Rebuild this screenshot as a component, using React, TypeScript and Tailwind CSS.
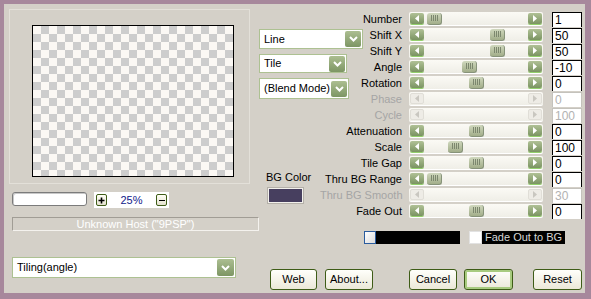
import React from "react";

type Row = { label: string; value: string; thumb?: number; disabled?: boolean };

const rows: Row[] = [
  { label: "Number", value: "1", thumb: 3 },
  { label: "Shift X", value: "50", thumb: 66 },
  { label: "Shift Y", value: "50", thumb: 66 },
  { label: "Angle", value: "-10", thumb: 38 },
  { label: "Rotation", value: "0", thumb: 45 },
  { label: "Phase", value: "0", disabled: true },
  { label: "Cycle", value: "100", disabled: true },
  { label: "Attenuation", value: "0", thumb: 45 },
  { label: "Scale", value: "100", thumb: 24 },
  { label: "Tile Gap", value: "0", thumb: 45 },
  { label: "Thru BG Range", value: "0", thumb: 3 },
  { label: "Thru BG Smooth", value: "30", disabled: true },
  { label: "Fade Out", value: "0", thumb: 45 },
];

function Arrow({ dir, disabled }: { dir: "l" | "r"; disabled?: boolean }) {
  return (
    <div
      className={
        disabled
          ? "w-[14px] h-[11px] shrink-0 rounded-[2px] bg-[#eeece6] border border-[#e0ded7] flex items-center justify-center"
          : "w-[14px] h-[11px] shrink-0 rounded-[2px] bg-gradient-to-b from-[#b0c196] to-[#7b9462] shadow-[0_1px_0_#94d06c] flex items-center justify-center"
      }
    >
      <svg width="6" height="7" viewBox="0 0 6 7">
        <path d={dir === "l" ? "M5 0 L1 3.5 L5 7Z" : "M1 0 L5 3.5 L1 7Z"} fill={disabled ? "#c9c7c0" : "#ffffff"} />
      </svg>
    </div>
  );
}

function Thumb({ offset }: { offset: number }) {
  return (
    <div
      className="h-[12px] w-[15px] shrink-0 rounded-[3px] bg-gradient-to-b from-[#d0d8be] to-[#a2ae8a] border-r border-b border-[#87937a] flex items-center justify-center gap-[1px]"
      style={{ marginLeft: offset }}
    >
      <div className="w-px h-[6px] bg-[#7c876e]" />
      <div className="w-px h-[6px] bg-[#7c876e]" />
      <div className="w-px h-[6px] bg-[#7c876e]" />
      <div className="w-px h-[6px] bg-[#7c876e]" />
    </div>
  );
}

function Chevron({ size = 16 }: { size?: number }) {
  return (
    <div
      className="shrink-0 rounded-[2px] bg-gradient-to-b from-[#acbe91] to-[#7d9664] flex items-center justify-center"
      style={{ width: size, height: size }}
    >
      <svg width="9" height="6" viewBox="0 0 9 6">
        <path d="M1 1 L4.5 4.5 L8 1" stroke="#ffffff" strokeWidth="2" fill="none" />
      </svg>
    </div>
  );
}

function Dropdown({ text, className }: { text: string; className: string }) {
  return (
    <div className={"shrink-0 flex items-center justify-between bg-white border border-[#adc192] pl-[4px] pr-[1px] text-[11px] text-black " + className}>
      <span className="whitespace-nowrap">{text}</span>
      <Chevron />
    </div>
  );
}

function Btn({ text, className, ok }: { text: string; className: string; ok?: boolean }) {
  return (
    <div
      className={
        (ok ? "shadow-[inset_0_0_0_2px_#a8cb7f] " : "") +
        "h-[21px] shrink-0 rounded-[3px] border border-[#3e5c17] bg-gradient-to-b from-[#fffffb] to-[#ebe8d8] text-[11px] text-black flex items-center justify-center " +
        className
      }
    >
      {text}
    </div>
  );
}

export default function App() {
  return (
    <div className="w-[591px] h-[299px] bg-[#a7889c] pl-[4px] pt-[4px] font-[family-name:Liberation_Sans,Arial,sans-serif] font-normal leading-none">
      <div className="w-[581px] h-[289px] bg-[#d4d0c8] flex flex-col">
        {/* top section */}
        <div className="h-[253px] flex">
          {/* left column */}
          <div className="w-[255px] shrink-0 flex flex-col">
            <div className="ml-[5px] mt-[5px] w-[241px] h-[175px] border border-[#e3e0d9] pl-[22px] pt-[15px]">
              <div className="w-[202px] h-[152px] border border-black bg-[repeating-conic-gradient(#cdcdcd_0_25%,#fbf8f4_0_50%)] bg-[length:16px_16px]" />
            </div>
            <div className="mt-[8px] flex items-start">
              <div className="ml-[8px] w-[75px] h-[14px] rounded-[3px] border border-[#7b7b7b] bg-white shadow-[inset_1px_1px_0_#c8c8c8]" />
              <div className="ml-[7px] w-[75px] h-[16px] bg-white flex items-center justify-between px-[2px]">
                <div className="w-[11px] h-[12px] rounded-[2px] border border-[#3e5c17] bg-gradient-to-b from-[#fffff6] to-[#e4e2cf] flex items-center justify-center">
                  <svg width="7" height="7" viewBox="0 0 7 7">
                    <path d="M3.5 0.5 V6.5 M0.5 3.5 H6.5" stroke="#000" strokeWidth="1.6" />
                  </svg>
                </div>
                <span className="text-[11px] text-[#10208a]">25%</span>
                <div className="w-[11px] h-[12px] rounded-[2px] border border-[#3e5c17] bg-gradient-to-b from-[#fffff6] to-[#e4e2cf] flex items-center justify-center">
                  <div className="w-[6px] h-px bg-black" />
                </div>
              </div>
            </div>
            <div className="mt-[9px] ml-[8px] w-[247px] h-[14px] border border-[#a19d95] border-r-[#f4f2ee] border-b-[#f4f2ee] flex items-center justify-center text-[11px] text-white">
              Unknown Host ("9PSP")
            </div>
          </div>

          {/* middle column */}
          <div className="w-[61px] shrink-0 flex flex-col items-start pt-[25px]">
            <Dropdown text="Line" className="w-[104px] h-[20px]" />
            <Dropdown text="Tile" className="mt-[5px] w-[88px] h-[19px]" />
            <Dropdown text="(Blend Mode)" className="mt-[5px] w-[90px] h-[21px]" />
            <div className="mt-[73px] ml-[7px] text-[11px] text-black whitespace-nowrap">BG Color</div>
            <div className="mt-[5px] ml-[9px] w-[35px] h-[15px] border border-[#f2f0ec] outline outline-1 outline-[#b4b0a8] bg-[#473f5f]" />
          </div>

          {/* right column */}
          <div className="flex-1 min-w-0 pr-[3px] pt-[7px] flex flex-col">
            {rows.map((r) => (
              <div key={r.label} className="h-[16px] flex items-center">
                <div className={r.disabled ? "flex-1 min-w-0 text-right text-[11px] text-[#a5a5a5] whitespace-nowrap" : "flex-1 min-w-0 text-right text-[11px] text-black whitespace-nowrap"}>
                  {r.label}
                </div>
                <div className="ml-[7px] w-[134px] h-[14px] shrink-0 rounded-[2px] bg-gradient-to-b from-[#fbfaf5] to-[#efeee7] border-b border-[#ffffff] flex items-center px-[1px]">
                  <Arrow dir="l" disabled={r.disabled} />
                  <div className="flex-1 h-full flex items-center">
                    {r.thumb !== undefined && <Thumb offset={r.thumb} />}
                  </div>
                  <Arrow dir="r" disabled={r.disabled} />
                </div>
                <div
                  className={
                    r.disabled
                      ? "ml-[9px] w-[30px] h-[15px] shrink-0 bg-white border border-[#c4c2bc] border-b-0 pl-[2px] text-[12px] leading-[15px] text-[#b2b2b2]"
                      : "ml-[9px] w-[30px] h-[15px] shrink-0 bg-white border border-black border-b-0 pl-[2px] text-[12px] leading-[15px] text-black"
                  }
                >
                  {r.value}
                </div>
              </div>
            ))}
            <div className="mt-[12px] flex items-center">
              <div className="ml-[44px] w-[96px] h-[13px] bg-black flex">
                <div className="w-[12px] h-full border border-[#2b5c9e] bg-gradient-to-br from-white to-[#dcdcdc]" />
              </div>
              <div className="ml-[9px] w-[13px] h-[13px] bg-white border border-[#e2e2e2]" />
              <div className="w-[83px] h-[13px] bg-black pl-[3px] text-[11px] leading-[13px] text-[#d6d6d6] whitespace-nowrap">
                Fade Out to BG
              </div>
            </div>
          </div>
        </div>

        {/* bottom row */}
        <div className="flex items-start">
          <div className="ml-[8px] w-[224px] h-[21px] shrink-0 flex items-center justify-between bg-white border border-[#adc192] pl-[4px] pr-[1px] text-[11px] text-black">
            <span>Tiling(angle)</span>
            <Chevron size={17} />
          </div>
          <div className="mt-[12px] flex">
            <Btn text="Web" className="ml-[34px] w-[47px]" />
            <Btn text="About..." className="ml-[8px] w-[48px]" />
            <Btn text="Cancel" className="ml-[36px] w-[48px]" />
            <Btn text="OK" className="ml-[7px] w-[49px]" ok />
            <Btn text="Reset" className="ml-[20px] w-[49px]" />
          </div>
        </div>
      </div>
    </div>
  );
}
